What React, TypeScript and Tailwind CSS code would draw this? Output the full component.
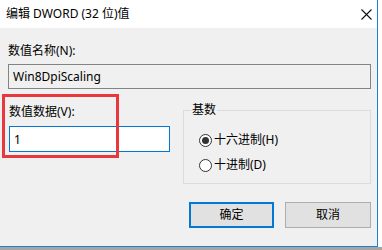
import { useState } from "react";

const FONT = "font-['Noto_Sans','Noto_Sans_CJK_SC',sans-serif]";

function Radio({
  checked,
  label,
  onSelect,
}: {
  checked: boolean;
  label: string;
  onSelect: () => void;
}) {
  return (
    <button
      type="button"
      onClick={onSelect}
      className="flex h-[16px] items-center gap-[2px] text-left"
    >
      <span className="flex size-[13px] items-center justify-center rounded-full border border-[#333] bg-white">
        {checked && <span className="size-[7px] rounded-full bg-[#333]" />}
      </span>
      <span className="text-[12px] leading-[16px] text-black">{label}</span>
    </button>
  );
}

export default function App() {
  const [value, setValue] = useState("1");
  const [hex, setHex] = useState(true);

  return (
    <div className={`relative flex h-[250px] w-[382px] flex-col bg-white ${FONT}`}>
      <div className="flex h-[247px] w-[378px] flex-col border-r border-b border-[#1883d7] bg-[#f0f0f0]">
        {/* title bar */}
        <div className="flex h-[28px] items-center justify-between bg-white pl-[6px] pr-[5px]">
          <span className="text-[12px] leading-[16px] text-black">编辑 DWORD (32 位)值</span>
          <svg width="11" height="11" viewBox="0 0 11 11">
            <path d="M0.5 0.5 L10.5 10.5 M10.5 0.5 L0.5 10.5" stroke="#111" strokeWidth="1.1" />
          </svg>
        </div>

        <div className="flex flex-1 flex-col pl-[8px] pr-[6px] pt-[15px]">
          <div className="text-[12px] leading-[16px] text-black">数值名称(N):</div>
          <div className="mt-[5px] flex h-[25px] items-center border border-[#838383] bg-[#f0f0f0] px-[4px] text-[12px] text-black">
            Win8DpiScaling
          </div>

          <div className="flex">
            <div className="ml-[1px] flex w-[161px] flex-col">
              <div className="mt-[15px] text-[12px] leading-[16px] text-black">数值数据(V):</div>
              <input
                value={value}
                onChange={(e) => setValue(e.target.value)}
                className="mt-[6px] h-[26px] w-[161px] border border-[#0078d7] bg-white px-[4px] text-[12px] text-black outline-none"
              />
            </div>

            <fieldset className="ml-[13px] mt-[13px] h-[82px] flex-1 border border-[#dcdcdc] pl-[7px]">
              <legend className="px-[1px] text-[12px] leading-[16px] text-black">基数</legend>
              <div className="flex flex-col gap-[9px] pl-[8px] pt-[14px]">
                <Radio checked={hex} label="十六进制(H)" onSelect={() => setHex(true)} />
                <Radio checked={!hex} label="十进制(D)" onSelect={() => setHex(false)} />
              </div>
            </fieldset>
          </div>

          <div className="mt-[18px] flex justify-end gap-[11px]">
            <button
              type="button"
              className="h-[26px] w-[85px] border-2 border-[#0078d7] bg-[#e1e1e1] text-[12px] text-black"
            >
              确定
            </button>
            <button
              type="button"
              className="h-[26px] w-[86px] border border-[#adadad] bg-[#e1e1e1] text-[12px] text-black"
            >
              取消
            </button>
          </div>
        </div>
      </div>
      <div className="h-[3px] w-full bg-[#a5a5a5]" />

      {/* highlight annotation */}
      <div className="pointer-events-none absolute left-[2px] top-[94px] h-[64px] w-[117px] border-[3px] border-[#e8383d]" />
    </div>
  );
}
